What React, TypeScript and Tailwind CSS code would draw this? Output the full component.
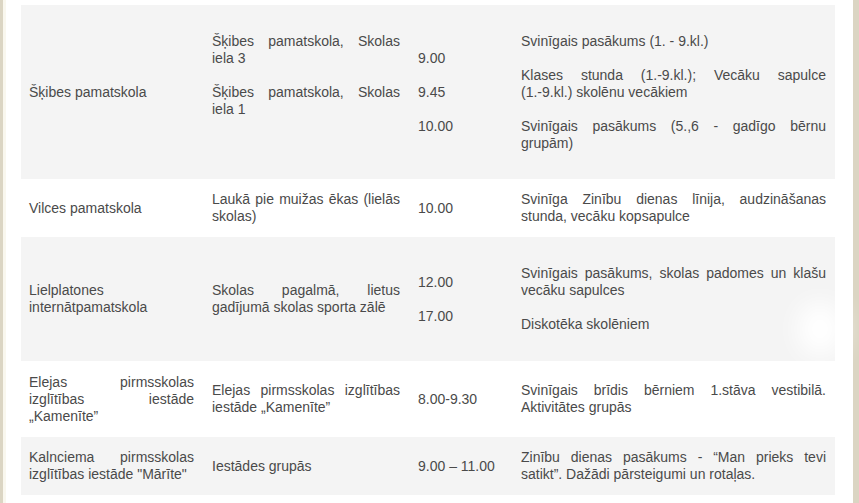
import React from "react";

type Row = {
  school: React.ReactNode;
  place: React.ReactNode;
  time: React.ReactNode;
  event: React.ReactNode;
  shaded: boolean;
  tall?: boolean;
};

// stacked paragraphs inside a cell, 17px apart like the original <p> spacing
const Stack = ({ items, pad }: { items: string[]; pad?: string }) => (
  <div className={`flex flex-col gap-[17px] ${pad ?? ""}`}>
    {items.map((t, i) =>
      t === "" ? (
        <p key={i} className="h-[17px]">
          &nbsp;
        </p>
      ) : (
        <p key={i}>{t}</p>
      )
    )}
  </div>
);

const rows: Row[] = [
  {
    school: "Šķibes pamatskola",
    place: (
      <Stack
        items={[
          "Šķibes pamatskola, Skolas iela 3",
          "Šķibes pamatskola, Skolas iela 1",
          "",
        ]}
      />
    ),
    time: <Stack items={["9.00", "9.45", "10.00"]} />,
    event: (
      <Stack
        pad="py-[15.5px]"
        items={[
          "Svinīgais pasākums (1. - 9.kl.)",
          "Klases stunda (1.-9.kl.); Vecāku sapulce (1.-9.kl.)\u00a0skolēnu vecākiem",
          "Svinīgais pasākums (5.,6 - gadīgo bērnu grupām)",
        ]}
      />
    ),
    shaded: true,
  },
  {
    school: "Vilces pamatskola",
    place: "Laukā pie muižas ēkas (lielās skolas)",
    time: "10.00",
    event: "Svinīga Zinību dienas līnija, audzināšanas stunda, vecāku kopsapulce",
    shaded: false,
  },
  {
    school: "Lielplatones internātpamatskola",
    place: "Skolas pagalmā, lietus gadījumā skolas sporta zālē",
    time: <Stack items={["12.00", "17.00"]} />,
    event: (
      <Stack
        pad="py-4"
        items={[
          "Svinīgais pasākums, skolas padomes un klašu vecāku sapulces",
          "Diskotēka skolēniem",
        ]}
      />
    ),
    shaded: true,
  },
  {
    school: "Elejas pirmsskolas izglītības iestāde „Kamenīte”",
    place: "Elejas pirmsskolas izglītības iestāde „Kamenīte”",
    time: "8.00-9.30",
    event: "Svinīgais brīdis bērniem 1.stāva vestibilā. Aktivitātes grupās",
    shaded: false,
    tall: true,
  },
  {
    school: "Kalnciema pirmsskolas izglītības iestāde \"Mārīte\"",
    place: "Iestādes grupās",
    time: "9.00 – 11.00",
    event:
      "Zinību dienas pasākums - “Man prieks tevi satikt”. Dažādi pārsteigumi un rotaļas.",
    shaded: true,
  },
];

export default function App() {
  return (
    <div className="flex h-[503px] w-[859px] overflow-hidden bg-white font-['Liberation_Sans',Arial,sans-serif] text-[14px] leading-[17px] text-[#4a4a4a]">
      <div className="w-[3px] bg-[#dbd5c3]" />
      <div className="w-[3px] bg-[#f9f7ee]" />
      <div className="relative flex-1 pl-[15px] pt-[5px]">
        <table className="w-[814px] table-fixed border-collapse">
          <colgroup>
            <col className="w-[183px]" />
            <col className="w-[206px]" />
            <col className="w-[103px]" />
            <col className="w-[322px]" />
          </colgroup>
          <tbody>
            {rows.map((r, i) => {
              const py = r.tall ? "py-[12.5px]" : "py-3";
              return (
                <tr key={i} className={r.shaded ? "bg-[#f4f4f4]" : "bg-white"}>
                  <td className={`${py} pl-2 pr-[10px] text-justify align-middle`}>
                    {r.school}
                  </td>
                  <td className={`${py} pl-2 pr-[10px] text-justify align-middle`}>
                    {r.place}
                  </td>
                  <td className={`${py} pl-2 pr-[10px] align-middle`}>{r.time}</td>
                  <td className={`${py} pl-2 pr-[9px] text-justify align-middle`}>
                    {r.event}
                  </td>
                </tr>
              );
            })}
          </tbody>
        </table>
        {/* faded scroll-to-top blob over the right edge */}
        <div className="absolute left-[792px] top-[302px] h-[54px] w-[44px] rounded-full bg-white blur-md" />
      </div>
      <div className="w-[6px] bg-[#dbd5c3]" />
    </div>
  );
}
